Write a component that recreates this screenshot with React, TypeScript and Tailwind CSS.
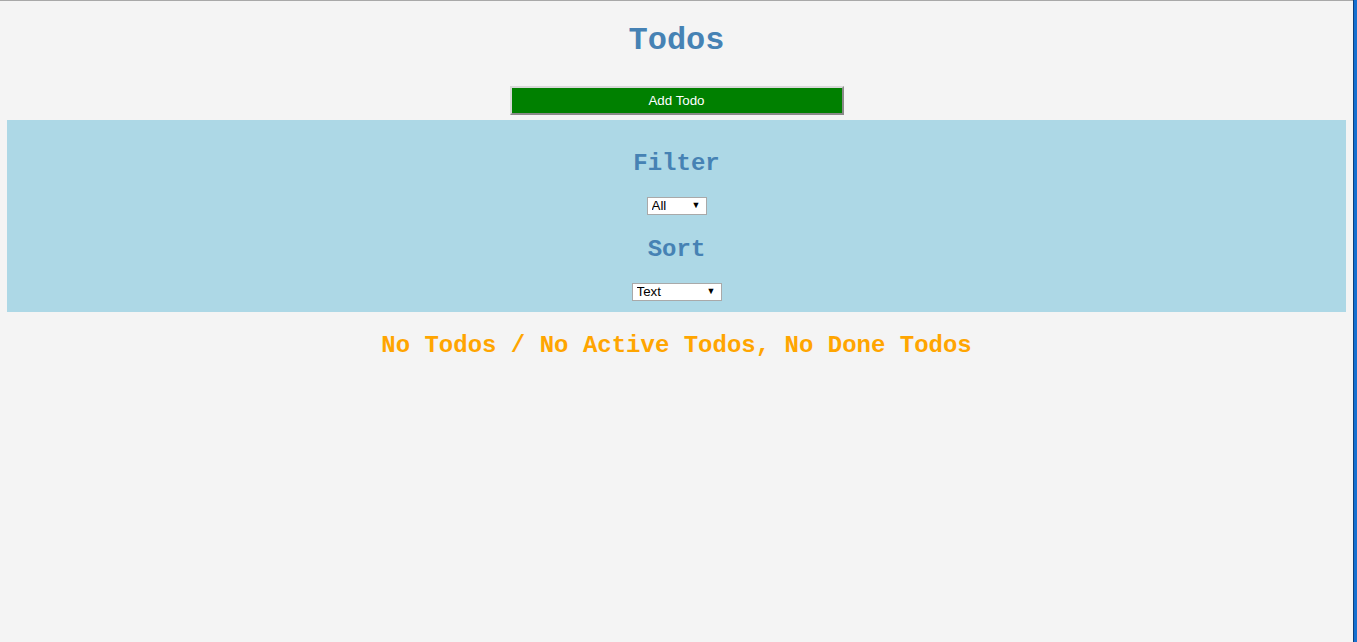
import { useState } from 'react';

const mono = { fontFamily: '"Liberation Mono", "Courier New", monospace' };
const sans = { fontFamily: '"Liberation Sans", Arial, sans-serif' };

function Select({ value, options, width, onChange }: { value: string; options: string[]; width: string; onChange: (v: string) => void }) {
  return (
    <div className={`relative mx-auto h-[18px] ${width}`}>
      <select
        value={value}
        onChange={(e) => onChange(e.target.value)}
        className="block h-full w-full appearance-none border border-[#a9a9a9] bg-white pl-[4px] text-[13.33px] leading-[16px] text-black outline-none"
        style={sans}
      >
        {options.map((o) => (
          <option key={o}>{o}</option>
        ))}
      </select>
      <span className="pointer-events-none absolute right-[6px] top-[3px] text-[9px] leading-[10px] text-black">▼</span>
    </div>
  );
}

export default function App() {
  const [filter, setFilter] = useState('All');
  const [sort, setSort] = useState('Text');

  return (
    <div className="flex h-[642px] w-full overflow-hidden bg-[#f4f4f4]">
      <div className="flex-1 border-t border-[#a8a8a8] px-[7px]">
        <h1 className="mt-[22px] text-center text-[32px] font-bold leading-[36px] text-[#4682b4]" style={mono}>
          Todos
        </h1>
        <div className="mt-[27px] flex justify-center">
          <button
            className="h-[29px] w-[334px] border-2 border-t-[#d8d8d8] border-l-[#d8d8d8] border-r-[#8a8a8a] border-b-[#8a8a8a] bg-[#008000] text-[13.33px] text-white"
            style={sans}
          >
            Add Todo
          </button>
        </div>
        <div className="mt-[5px] flex h-[192px] flex-col bg-[#add8e6] pt-[30px]">
          <h2 className="text-center text-[24px] font-bold leading-[27px] text-[#4682b4]" style={mono}>
            Filter
          </h2>
          <div className="mt-[20px]">
            <Select value={filter} options={['All', 'Active', 'Done']} width="w-[60px]" onChange={setFilter} />
          </div>
          <h2 className="mt-[21px] text-center text-[24px] font-bold leading-[27px] text-[#4682b4]" style={mono}>
            Sort
          </h2>
          <div className="mt-[20px]">
            <Select value={sort} options={['Text', 'Done']} width="w-[90px]" onChange={setSort} />
          </div>
        </div>
        <p className="mt-[20px] text-center text-[24px] font-bold leading-[27px] text-[#ffa500]" style={mono}>
          No Todos / No Active Todos, No Done Todos
        </p>
      </div>
      <div className="w-[4px] border-l border-[#0b3f80] bg-[#1670d0]" />
    </div>
  );
}
